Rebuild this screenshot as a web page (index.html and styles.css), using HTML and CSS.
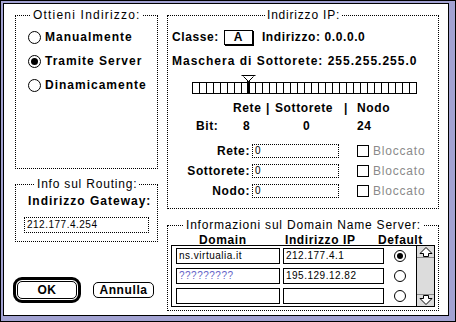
FILE: index.html
```html
<!DOCTYPE html>
<html lang="it">
<head>
    <meta charset="UTF-8">
    <title>MacTCP</title>
    <link rel="stylesheet" href="styles.css">
</head>
<body>
    <div class="window">
        <div class="dialog">
            <div class="col-left">
                <fieldset class="group group-method">
                    <legend class="legend-method">Ottieni Indirizzo:</legend>
                    <div class="radio-list">
                        <div class="radio"><span class="radio-mark"></span>Manualmente</div>
                        <div class="radio"><span class="radio-mark on"></span>Tramite Server</div>
                        <div class="radio"><span class="radio-mark"></span>Dinamicamente</div>
                    </div>
                </fieldset>
                <fieldset class="group group-routing">
                    <legend class="legend-routing">Info sul Routing:</legend>
                    <div class="gateway-label">Indirizzo Gateway:</div>
                    <div class="field gateway-field">212.177.4.254</div>
                </fieldset>
                <div class="buttons">
                    <div class="default-ring"><button class="btn btn-ok">OK</button></div>
                    <button class="btn btn-cancel">Annulla</button>
                </div>
            </div>

            <div class="col-right">
                <fieldset class="group group-ip">
                    <legend class="legend-ip">Indirizzo IP:</legend>
                    <div class="class-row">
                        <span>Classe:</span>
                        <span class="class-box">A</span>
                        <span class="address">Indirizzo: 0.0.0.0</span>
                    </div>
                    <div class="mask-row">Maschera di Sottorete: 255.255.255.0</div>
                    <div class="ruler-wrap">
                        <div class="ruler"></div>
                        <svg class="thumb" width="15" height="19" viewBox="0 0 15 19">
                            <rect x="6" y="4" width="3" height="15" fill="#000"/>
                            <path d="M0.5 0.5 H14.5 M2.5 1.5 L7.5 6.5 L12.5 1.5" fill="#fff" stroke="#000" stroke-width="1"/>
                        </svg>
                    </div>
                    <div class="bits-head">
                        <span class="h-rete">Rete</span>
                        <span class="h-sep1">|</span>
                        <span class="h-sotto">Sottorete</span>
                        <span class="h-sep2">|</span>
                        <span>Nodo</span>
                    </div>
                    <div class="bits-row">
                        <span class="b-label">Bit:</span>
                        <span class="b-rete">8</span>
                        <span class="b-sotto">0</span>
                        <span>24</span>
                    </div>
                    <div class="part-rows">
                        <div class="part-row">
                            <span class="part-label">Rete:</span>
                            <span class="field part-field">0</span>
                            <span class="check"></span>
                            <span class="check-label">Bloccato</span>
                        </div>
                        <div class="part-row">
                            <span class="part-label">Sottorete:</span>
                            <span class="field part-field">0</span>
                            <span class="check"></span>
                            <span class="check-label">Bloccato</span>
                        </div>
                        <div class="part-row">
                            <span class="part-label">Nodo:</span>
                            <span class="field part-field">0</span>
                            <span class="check"></span>
                            <span class="check-label">Bloccato</span>
                        </div>
                    </div>
                </fieldset>

                <fieldset class="group group-dns">
                    <legend class="legend-dns">Informazioni sul Domain Name Server:</legend>
                    <div class="dns-head">
                        <span class="dh-domain">Domain</span>
                        <span class="dh-ip">Indirizzo IP</span>
                        <span>Default</span>
                    </div>
                    <div class="dns-list">
                        <div class="dns-rows">
                            <div class="dns-row">
                                <span class="cell cell-domain">ns.virtualia.it</span>
                                <span class="cell cell-ip">212.177.4.1</span>
                                <span class="radio-mark on small"></span>
                            </div>
                            <div class="dns-row">
                                <span class="cell cell-domain unknown">?????????</span>
                                <span class="cell cell-ip">195.129.12.82</span>
                                <span class="radio-mark small"></span>
                            </div>
                            <div class="dns-row">
                                <span class="cell cell-domain"></span>
                                <span class="cell cell-ip"></span>
                                <span class="radio-mark small"></span>
                            </div>
                        </div>
                        <div class="scroll">
                            <div class="arrow arrow-up">
                                <svg width="16" height="11" viewBox="0 0 16 11"><path d="M8 1.5 L14 7.5 H10.5 V10.5 H5.5 V7.5 H2 Z" fill="#fff" stroke="#000" stroke-width="1"/></svg>
                            </div>
                            <div class="arrow arrow-down">
                                <svg width="16" height="11" viewBox="0 0 16 11"><path d="M8 9.5 L14 3.5 H10.5 V0.5 H5.5 V3.5 H2 Z" fill="#fff" stroke="#000" stroke-width="1"/></svg>
                            </div>
                        </div>
                    </div>
                </fieldset>
            </div>
        </div>
    </div>
</body>
</html>
```

FILE: styles.css
```css
* {
    box-sizing: border-box;
}
body {
    margin: 0;
    font-family: "Liberation Sans", Arial, sans-serif;
    font-size: 12px;
    color: #000;
    background: #fff;
}
.window {
    width: 456px;
    height: 322px;
    border: 1px solid #000;
    background: #a2a2d2;
    padding: 2px 6px 5px 2px;
}
.dialog {
    height: 100%;
    border: 1px solid #000;
    background: #fff;
    display: flex;
    gap: 9px;
    padding: 5px 0 0 11px;
}
.col-left {
    width: 143px;
    display: flex;
    flex-direction: column;
}
.col-right {
    width: 272px;
    display: flex;
    flex-direction: column;
}

/* group boxes */
.group {
    margin: 0;
    padding: 0;
    min-width: 0;
    border: 1px dotted #000;
}
.group legend {
    padding: 0 2px;
    font-size: 12px;
    line-height: 12px;
    letter-spacing: 0.8px;
}
.legend-method { margin-left: 15px; letter-spacing: 1.2px !important; }
.legend-routing { margin-left: 19px; }
.legend-ip { margin-left: 97px; }
.legend-dns { margin-left: 16px; }

.group-method { height: 160px; }
.group-routing { height: 64px; margin-top: 9px; }
.group-ip { height: 200px; }
.group-dns { height: 92px; margin-top: 10px; }

/* radio buttons */
.radio-list {
    padding: 4px 0 0 12px;
}
.radio {
    display: flex;
    align-items: center;
    height: 24px;
    font-weight: bold;
    letter-spacing: 1px;
}
.radio-mark {
    width: 13px;
    height: 13px;
    border: 1px solid #000;
    border-radius: 50%;
    margin-right: 4px;
    position: relative;
    background: #fff;
    flex: none;
}
.radio-mark.on::after {
    content: "";
    position: absolute;
    left: 2px;
    top: 2px;
    width: 7px;
    height: 7px;
    background: #000;
    border-radius: 50%;
}

/* text fields */
.field {
    border: 1px dotted #000;
    font-size: 10px;
    letter-spacing: 0.5px;
    padding-left: 2px;
}
.gateway-label {
    margin: 4px 0 0 12px;
    height: 14px;
    line-height: 14px;
    font-weight: bold;
    letter-spacing: 1px;
}
.gateway-field {
    margin: 9px 0 0 8px;
    width: 125px;
    height: 16px;
    line-height: 14px;
}

/* buttons */
.buttons {
    display: flex;
    align-items: center;
    margin-top: 35px;
}
.default-ring {
    margin-left: -2px;
    width: 68px;
    height: 26px;
    border: 3px solid #000;
    border-radius: 9px;
    padding: 1px;
}
.btn {
    font-family: inherit;
    font-size: 12px;
    font-weight: bold;
    letter-spacing: 0.6px;
    background: #fff;
    color: #000;
    border: 1px solid #000;
    border-radius: 5px;
    padding: 0;
}
.btn-ok {
    width: 100%;
    height: 100%;
}
.btn-cancel {
    margin-left: 12px;
    width: 61px;
    height: 16px;
}

/* ip group */
.class-row {
    display: flex;
    align-items: center;
    margin-top: 8px;
    padding-left: 4px;
    height: 16px;
    font-weight: bold;
    letter-spacing: 0.6px;
}
.class-box {
    margin-left: 5px;
    width: 29px;
    height: 15px;
    line-height: 13px;
    border: 1px solid #000;
    box-shadow: 1px 1px 0 #000;
    text-align: center;
}
.address {
    margin-left: 9px;
}
.mask-row {
    margin-top: 9px;
    padding-left: 4px;
    height: 14px;
    line-height: 14px;
    font-weight: bold;
    letter-spacing: 1px;
}
.ruler-wrap {
    position: relative;
    margin: 7px 0 0 24px;
    height: 19px;
}
.ruler {
    position: absolute;
    left: 0;
    bottom: 0;
    width: 225px;
    height: 12px;
    border: 1px solid #000;
    border-right: 0;
    background: repeating-linear-gradient(90deg, #fff 0 6px, #000 6px 7px);
}
.thumb {
    position: absolute;
    left: 49px;
    top: 0;
}
.bits-head,
.bits-row {
    display: flex;
    height: 14px;
    line-height: 14px;
    font-weight: bold;
    letter-spacing: 0.6px;
}
.bits-head {
    margin-top: 7px;
    padding-left: 65px;
}
.h-rete { width: 33px; }
.h-sep1 { width: 9px; }
.h-sotto { width: 69px; }
.h-sep2 { width: 13px; }
.bits-row {
    margin-top: 4px;
    padding-left: 28px;
}
.b-label { width: 47px; }
.b-rete { width: 60px; }
.b-sotto { width: 54px; }

.part-rows {
    margin-top: 11px;
    display: flex;
    flex-direction: column;
    gap: 6px;
}
.part-row {
    display: flex;
    align-items: center;
    height: 14px;
}
.part-label {
    width: 82px;
    text-align: right;
    font-weight: bold;
    letter-spacing: 0.6px;
}
.part-field {
    margin-left: 2px;
    width: 87px;
    height: 14px;
    line-height: 12px;
}
.check {
    margin-left: 18px;
    width: 12px;
    height: 12px;
    border: 1px solid #000;
}
.check-label {
    margin-left: 4px;
    color: #8a8a8a;
    letter-spacing: 0.8px;
}

/* dns group */
.dns-head {
    display: flex;
    margin-top: 4px;
    height: 10px;
    line-height: 10px;
    padding-left: 31px;
    font-weight: bold;
    letter-spacing: 0.6px;
}
.dh-domain { width: 86px; }
.dh-ip { width: 93px; }
.dns-list {
    margin: 0 0 0 3px;
    width: 264px;
    height: 62px;
    border: 1px solid #000;
    display: flex;
}
.dns-rows {
    flex: 1;
    padding: 2px 0 0 4px;
    display: flex;
    flex-direction: column;
    gap: 4px;
}
.dns-row {
    display: flex;
    align-items: center;
    height: 16px;
}
.cell {
    border: 1px solid #000;
    height: 16px;
    line-height: 14px;
    font-size: 10px;
    letter-spacing: 0.5px;
    padding-left: 2px;
}
.cell-domain { width: 104px; }
.cell-ip { width: 101px; margin-left: 3px; }
.unknown { color: #6464c8; }
.radio-mark.small {
    margin: 0 0 0 10px;
    width: 12px;
    height: 12px;
}
.radio-mark.small.on::after {
    left: 2px;
    top: 2px;
    width: 6px;
    height: 6px;
}
.scroll {
    width: 18px;
    border-left: 1px solid #000;
    background: #dcdcdc;
    display: flex;
    flex-direction: column;
    justify-content: space-between;
}
.arrow {
    height: 12px;
    display: flex;
    align-items: center;
    justify-content: center;
    background: #dcdcdc;
}
.arrow-up { border-bottom: 1px solid #888; }
.arrow-down { border-top: 1px solid #888; }
```
